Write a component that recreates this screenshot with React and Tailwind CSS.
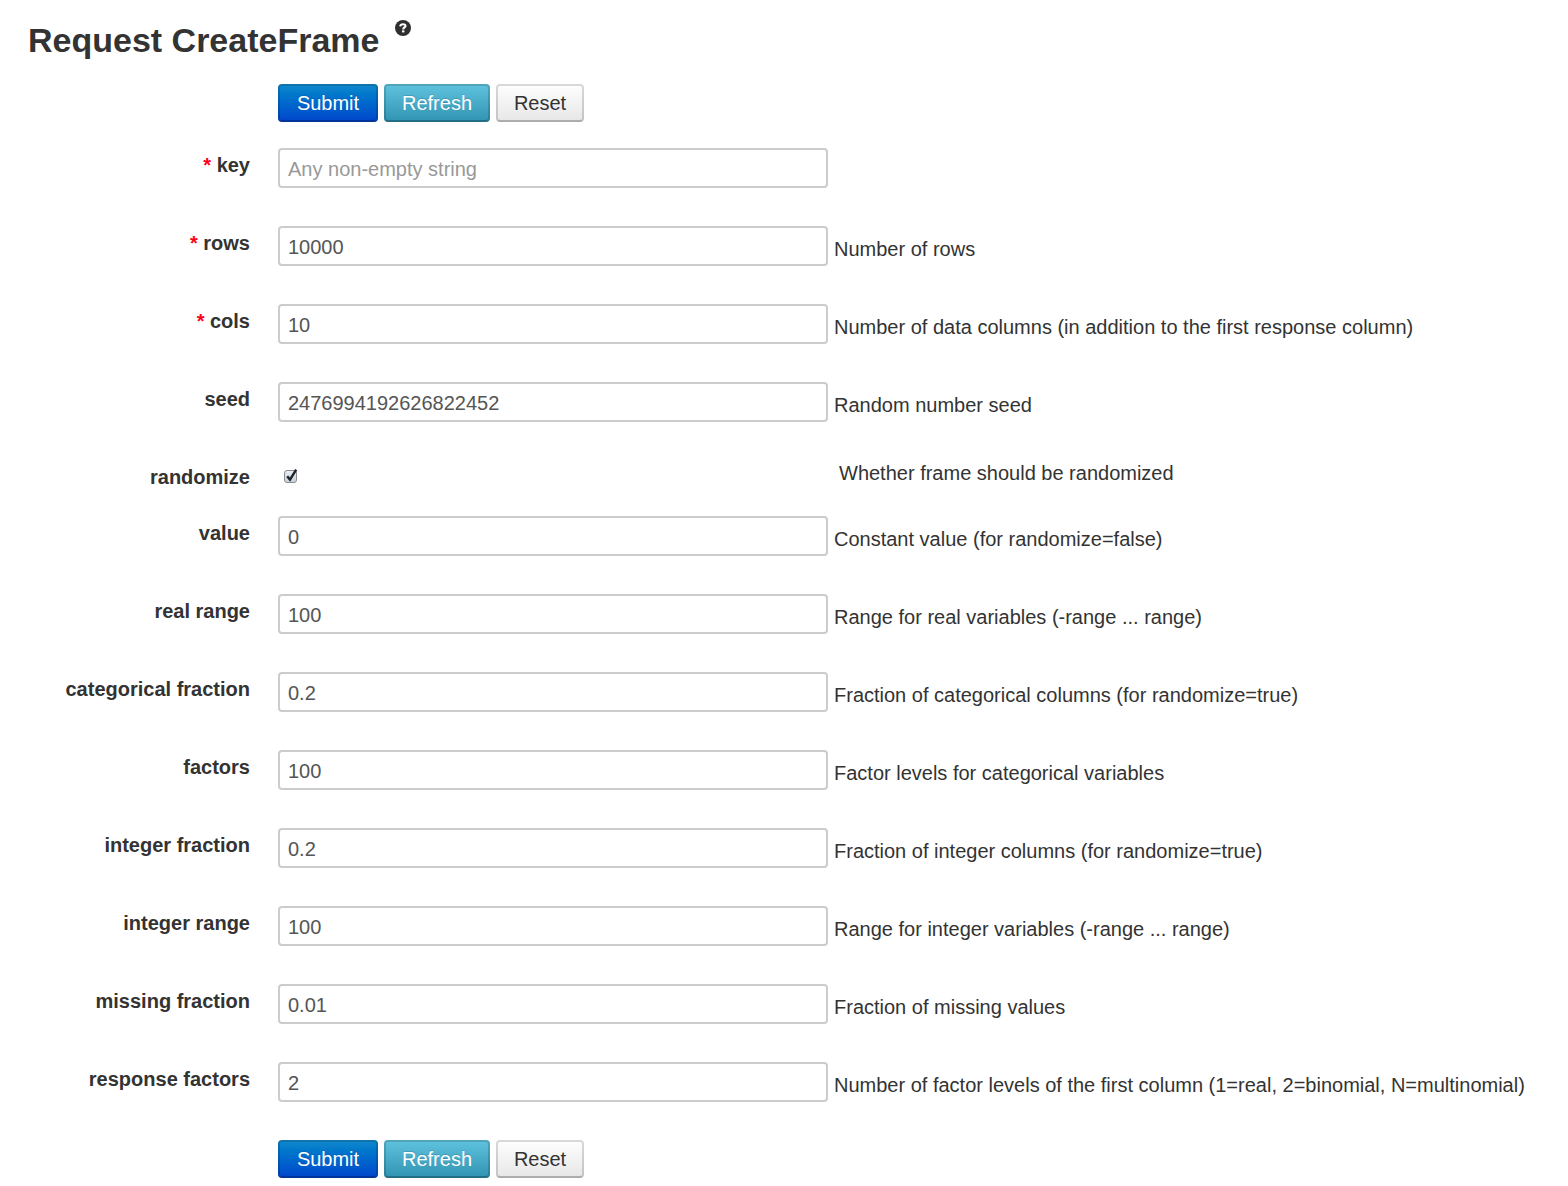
import React from "react";

const fieldsBefore = [
  { id: "key", label: "key", required: true, placeholder: "Any non-empty string", value: "" },
  { id: "rows", label: "rows", required: true, value: "10000", hint: "Number of rows" },
  {
    id: "cols",
    label: "cols",
    required: true,
    value: "10",
    hint: "Number of data columns (in addition to the first response column)",
  },
  { id: "seed", label: "seed", value: "2476994192626822452", hint: "Random number seed" },
];

const fieldsAfter = [
  { id: "value", label: "value", value: "0", hint: "Constant value (for randomize=false)" },
  { id: "real_range", label: "real range", value: "100", hint: "Range for real variables (-range ... range)" },
  {
    id: "categorical_fraction",
    label: "categorical fraction",
    value: "0.2",
    hint: "Fraction of categorical columns (for randomize=true)",
  },
  { id: "factors", label: "factors", value: "100", hint: "Factor levels for categorical variables" },
  {
    id: "integer_fraction",
    label: "integer fraction",
    value: "0.2",
    hint: "Fraction of integer columns (for randomize=true)",
  },
  { id: "integer_range", label: "integer range", value: "100", hint: "Range for integer variables (-range ... range)" },
  { id: "missing_fraction", label: "missing fraction", value: "0.01", hint: "Fraction of missing values" },
  {
    id: "response_factors",
    label: "response factors",
    value: "2",
    hint: "Number of factor levels of the first column (1=real, 2=binomial, N=multinomial)",
  },
];

function FieldLabel({ id, required, children }) {
  return (
    <label htmlFor={id} className="w-[222px] shrink-0 text-right font-bold leading-[34px]">
      {required && <span className="text-[#ff0018]">* </span>}
      {children}
    </label>
  );
}

function TextField({ id, label, required, placeholder, value, hint }) {
  return (
    <div className="mb-[38px] flex items-start">
      <FieldLabel id={id} required={required}>
        {label}
      </FieldLabel>
      <input
        id={id}
        type="text"
        defaultValue={value}
        placeholder={placeholder}
        className="ml-7 h-10 w-[550px] min-w-0 rounded-[4px] border-2 border-[#cccccc] bg-white px-2 pt-0.5 text-[#555555] outline-none placeholder:text-[#999999] focus:border-sky-400"
      />
      {hint && <span className="ml-1.5 -mb-1.5 shrink-0 leading-[46px]">{hint}</span>}
    </div>
  );
}

function CheckField({ id, label, hint }) {
  return (
    <div className="mb-[22px] flex items-start">
      <FieldLabel id={id}>{label}</FieldLabel>
      <div className="ml-7 flex h-8 w-[550px] min-w-0 items-center pl-1.5">
        <span className="relative flex">
          <input
            id={id}
            type="checkbox"
            defaultChecked
            className="peer size-[13px] appearance-none rounded-[3px] border border-[#8b8d90] bg-linear-to-b from-[#e9ecf0] to-[#c9d2dd]"
          />
          <svg
            viewBox="0 0 16 16"
            className="pointer-events-none absolute -top-[2px] left-0 hidden size-4 peer-checked:block"
            fill="none"
            stroke="#1b222c"
            strokeWidth="2.4"
            aria-hidden="true"
          >
            <path d="M3.2 8.2L6 11.6L12.2 1.6" />
          </svg>
        </span>
      </div>
      <span className="ml-[11px] shrink-0 leading-[26px]">{hint}</span>
    </div>
  );
}

const buttonBase =
  "h-[38px] cursor-pointer rounded-[4px] border-2 leading-[34px] bg-origin-border bg-linear-to-b";

function Actions() {
  return (
    <div className="ml-[250px] flex gap-1.5">
      <button
        type="submit"
        className={`${buttonBase} w-[100px] border-black/15 border-b-black/25 from-[#1489cc] to-[#0343cb] text-white text-shadow-[0_-1px_0_rgb(0_0_0/0.15)]`}
      >
        Submit
      </button>
      <button
        type="button"
        className={`${buttonBase} w-[106px] border-black/15 border-b-black/25 from-[#5fc3de] to-[#3093b1] text-white text-shadow-[0_-1px_0_rgb(0_0_0/0.15)]`}
      >
        Refresh
      </button>
      <button
        type="reset"
        className={`${buttonBase} w-[88px] border-black/15 border-b-black/25 from-white to-[#e6e6e6] text-[#333333]`}
      >
        Reset
      </button>
    </div>
  );
}

function HelpIcon() {
  return (
    <svg viewBox="0 0 16 16" className="size-4" aria-hidden="true">
      <circle cx="8" cy="8" r="8" fill="#2f2f2f" />
      <path
        d="M5.2 6.3C5.4 4.7 6.4 4.3 8 4.3C9.7 4.3 10.5 5 10.5 6.1C10.5 7.6 8.2 7.4 8.2 9.4"
        fill="none"
        stroke="#ffffff"
        strokeWidth="2.1"
      />
      <rect x="7" y="10.4" width="2.4" height="2" fill="#ffffff" />
    </svg>
  );
}

export default function App() {
  return (
    <main className="min-h-screen bg-white px-7 pt-5 pb-2 font-['Liberation_Sans',Arial,sans-serif] text-[20px] text-[#333333]">
      <header className="mb-6 flex items-start gap-4">
        <h1 className="text-[34px] font-bold leading-10">Request CreateFrame</h1>
        <a href="#help" aria-label="Help">
          <HelpIcon />
        </a>
      </header>
      <form onSubmit={(e) => e.preventDefault()}>
        <Actions />
        <div className="mt-[26px]">
          {fieldsBefore.map((f) => (
            <TextField key={f.id} {...f} />
          ))}
          <CheckField id="randomize" label="randomize" hint="Whether frame should be randomized" />
          {fieldsAfter.map((f) => (
            <TextField key={f.id} {...f} />
          ))}
        </div>
        <Actions />
      </form>
    </main>
  );
}
